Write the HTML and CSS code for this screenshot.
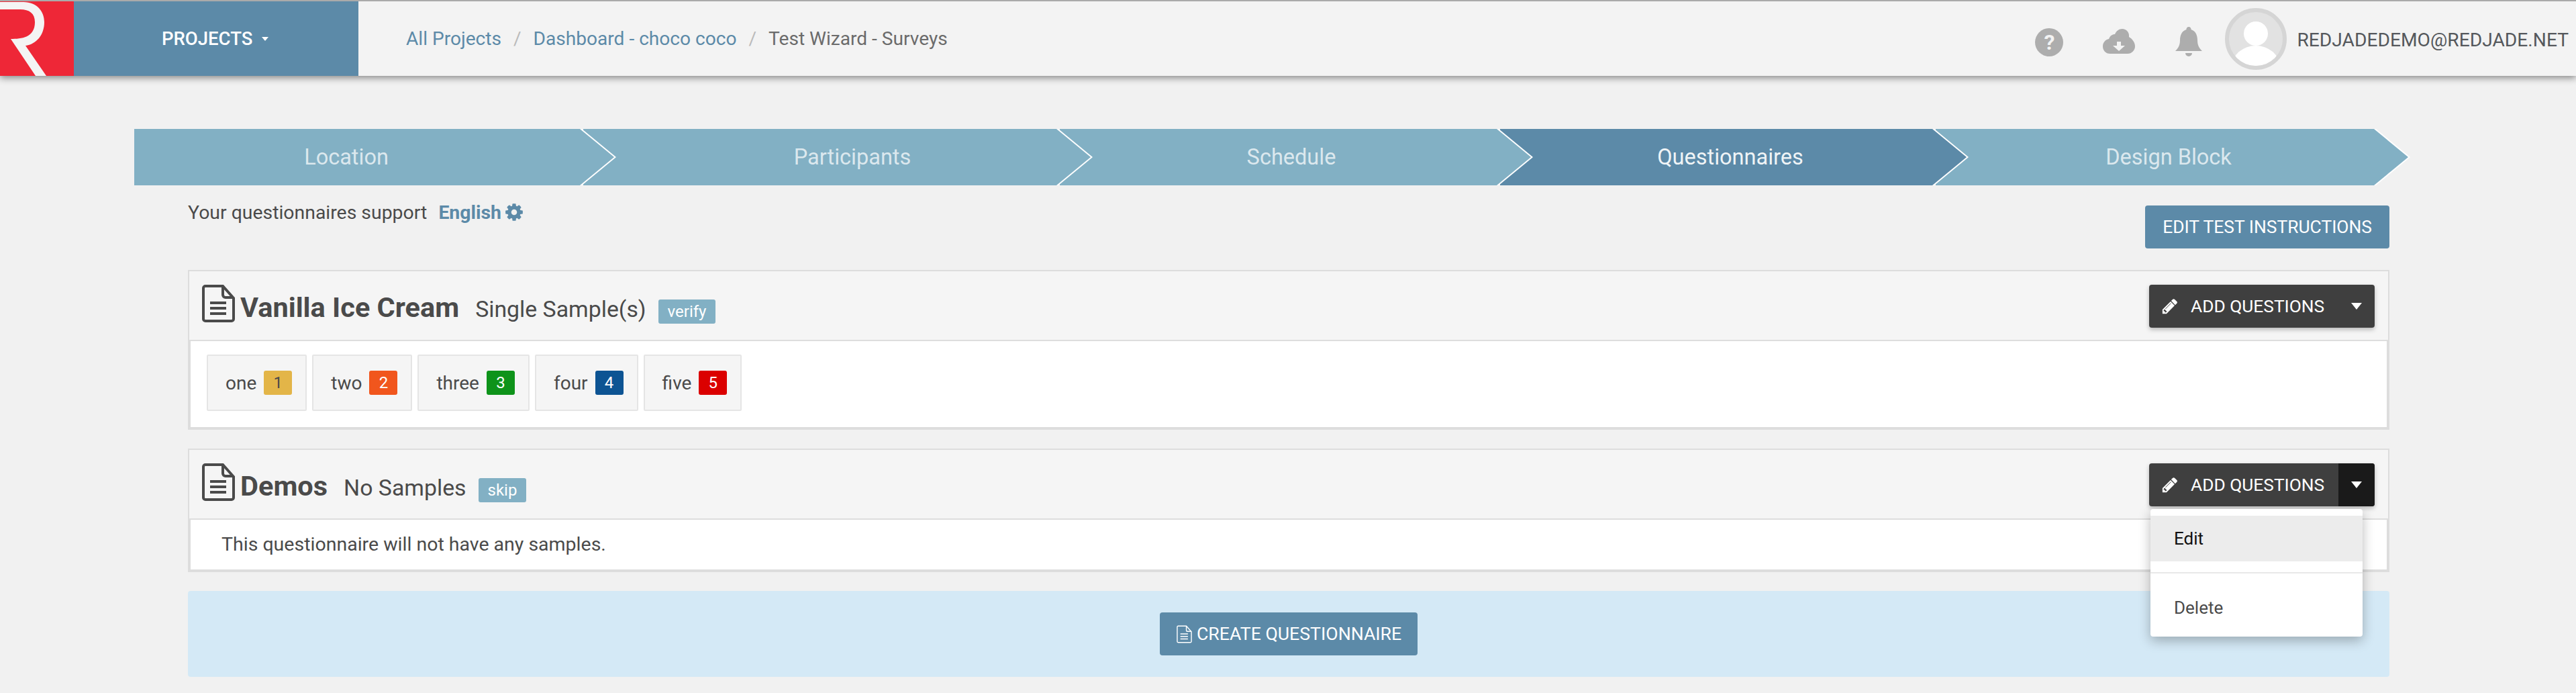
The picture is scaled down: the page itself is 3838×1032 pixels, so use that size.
FILE: index.html
```html
<!DOCTYPE html>
<html lang="en">
<head>
<meta charset="utf-8">
<title>Test Wizard - Surveys</title>
<link rel="stylesheet" href="styles.css">
</head>
<body>
<svg class="defs" width="0" height="0" aria-hidden="true">
  <symbol id="file" viewBox="0 0 49 56">
    <path d="M5 2H31L47 20V51a3 3 0 0 1-3 3H5a3 3 0 0 1-3-3V5a3 3 0 0 1 3-3Z"/>
    <path d="M31 2V15a4 4 0 0 0 4 4H47"/>
    <path d="M12 27H36M12 35H36M12 43H36"/>
  </symbol>
  <symbol id="pencil" viewBox="0 0 1792 1792">
    <path fill="currentColor" d="M491 1536l91-91-235-235-91 91v107h128v128h107zm523-928q0-22-22-22-10 0-17 7l-542 542q-7 7-7 17 0 22 22 22 10 0 17-7l542-542q7-7 7-17zm-54-192l416 416-832 832h-416v-416zm683 96q0 53-37 90l-166 166-416-416 166-165q36-38 90-38 53 0 91 38l235 234q37 39 37 91z"/>
  </symbol>
</svg>

<header class="topbar">
  <a class="logo">
    <svg viewBox="0 2 110 111" width="110" height="111"><path fill="#f4f4f4" d="M0 3H35C55 3 66 17 66 33C66 52 54 66 38 68L69 113H53L16 58C32 58 52 56 52 33C52 20 44 14 30 14H0Z"/></svg>
  </a>
  <a class="projects">PROJECTS<span class="caret-sm"></span></a>
  <nav class="crumbs">
    <a>All Projects</a><span class="sep">/</span><a>Dashboard - choco coco</a><span class="sep">/</span><span class="current">Test Wizard - Surveys</span>
  </nav>
  <div class="user">
    <span class="help">?</span>
    <svg class="cloud" viewBox="0 0 48 37" width="48" height="37"><path fill="#adadad" d="M11 37C4 37 0 32 0 26C0 20 4 16 9 15C11 10 14 8 18 8C20 3 24 0 29 0C35 0 40 5 39 12C44 15 48 20 48 26C48 32 43 37 37 37Z"/><path fill="#f3f3f3" d="M21 19H27V25H33L24 33L15 25H21Z"/></svg>
    <svg class="bell" viewBox="0 0 40 44" width="40" height="44"><path fill="#adadad" d="M20 0a3.500 3.500 0 0 1 3.500 4C30 6 33 12 33 20C33 28 36 32 40 36H0C4 32 7 28 7 20C7 12 10 6 16.500 4A3.500 3.500 0 0 1 20 0ZM15 39H25A5 5 0 0 1 15 39Z"/></svg>
    <svg class="avatar" viewBox="0 0 92 92" width="92" height="92">
      <defs><clipPath id="avatar-clip"><circle cx="46" cy="46" r="40"/></clipPath></defs>
      <circle cx="46" cy="46" r="43" fill="#e2e2e2" stroke="#d5d5d5" stroke-width="6"/>
      <g clip-path="url(#avatar-clip)" fill="#fff"><ellipse cx="46" cy="38" rx="18" ry="18"/><ellipse cx="46" cy="88" rx="36" ry="32"/></g>
    </svg>
    <span class="email">REDJADEDEMO@REDJADE.NET</span>
  </div>
</header>

<main class="page">
  <ol class="stepper">
    <li class="step step-location"><span class="step-fill">Location</span></li>
    <li class="step step-participants"><span class="step-fill">Participants</span></li>
    <li class="step step-schedule"><span class="step-fill">Schedule</span></li>
    <li class="step step-questionnaires is-active"><span class="step-fill">Questionnaires</span></li>
    <li class="step step-design"><span class="step-fill">Design Block</span></li>
  </ol>

  <section class="content">
    <div class="support-row">
      <p class="support">Your questionnaires support <a class="lang">English <svg class="gear" viewBox="0 0 1792 1792" width="30" height="30"><path fill="currentColor" d="M1152 896q0-106-75-181t-181-75-181 75-75 181 75 181 181 75 181-75 75-181zm512-109v222q0 12-8 23t-20 13l-185 28q-19 54-39 91 35 50 107 138 10 12 10 25t-9 23q-27 37-99 108t-94 71q-12 0-26-9l-138-108q-44 23-91 38-16 136-29 186-7 28-36 28h-222q-14 0-24.500-8.500t-11.500-21.500l-28-184q-49-16-90-37l-141 107q-10 9-25 9-14 0-25-11-126-114-165-168-7-10-7-23 0-12 8-23 15-21 51-66.500t54-70.500q-27-50-41-99l-183-27q-13-2-21-12.500t-8-23.500v-222q0-12 8-23t19-13l186-28q14-46 39-92-40-57-107-138-10-12-10-24 0-10 9-23 26-36 98.500-107.500t94.500-71.500q13 0 26 10l138 107q44-23 91-38 16-136 29-186 7-28 36-28h222q14 0 24.500 8.500t11.500 21.500l28 184q49 16 90 37l142-107q9-9 24-9 13 0 25 10 129 119 165 170 7 8 7 22 0 12-8 23-15 21-51 66.500t-54 70.500q26 50 41 98l183 28q13 2 21 12.500t8 23.500z"/></svg></a></p>
      <a class="btn btn-blue btn-instructions">EDIT TEST INSTRUCTIONS</a>
    </div>

    <article class="card">
      <div class="card-head">
        <svg class="file-icon"><use href="#file"/></svg>
        <h2 class="card-title">Vanilla Ice Cream</h2>
        <span class="card-sub">Single Sample(s)</span>
        <span class="tag">verify</span>
        <div class="split">
          <a class="split-main"><svg class="pencil"><use href="#pencil"/></svg>ADD QUESTIONS</a>
          <a class="split-toggle"><span class="caret"></span></a>
        </div>
      </div>
      <div class="card-body samples">
        <span class="chip">one<b class="badge badge-1">1</b></span>
        <span class="chip">two<b class="badge badge-2">2</b></span>
        <span class="chip">three<b class="badge badge-3">3</b></span>
        <span class="chip">four<b class="badge badge-4">4</b></span>
        <span class="chip">five<b class="badge badge-5">5</b></span>
      </div>
    </article>

    <article class="card">
      <div class="card-head">
        <svg class="file-icon"><use href="#file"/></svg>
        <h2 class="card-title">Demos</h2>
        <span class="card-sub">No Samples</span>
        <span class="tag">skip</span>
        <div class="split is-open">
          <a class="split-main"><svg class="pencil"><use href="#pencil"/></svg>ADD QUESTIONS</a>
          <a class="split-toggle"><span class="caret"></span></a>
          <ul class="menu">
            <li class="menu-item is-hover">Edit</li>
            <li class="menu-divider"></li>
            <li class="menu-item menu-delete">Delete</li>
          </ul>
        </div>
      </div>
      <div class="card-body note">This questionnaire will not have any samples.</div>
    </article>

    <div class="create-band">
      <a class="btn btn-blue btn-create"><svg class="file-small"><use href="#file"/></svg>CREATE QUESTIONNAIRE</a>
    </div>
  </section>
</main>
</body>
</html>
```

FILE: styles.css
```css
* { box-sizing: border-box; }
html, body { margin: 0; padding: 0; }
body {
  background: #f1f1f1;
  color: #4a4a4a;
  font-family: Roboto, "Liberation Sans", sans-serif;
  font-size: 28px;
  height: 1032px;
  overflow: hidden;
}
.defs { position: absolute; }
a { color: inherit; text-decoration: none; }

/* top bar */
.topbar {
  display: flex;
  align-items: stretch;
  height: 113px;
  border-top: 2px solid #aaa;
  background: #f3f3f3;
  box-shadow: 0 3px 10px rgba(0, 0, 0, .45);
}
.logo { width: 110px; background: #ee2737; display: block; }
.logo svg { display: block; }
.projects {
  width: 424px;
  background: #5c8aa8;
  color: #fff;
  font-size: 27.5px;
  font-weight: 500;
  display: flex;
  align-items: center;
  padding-left: 131px;
}
.caret-sm {
  margin-left: 14px;
  border-top: 6px solid #fff;
  border-left: 5px solid transparent;
  border-right: 5px solid transparent;
}
.crumbs {
  display: flex;
  align-items: center;
  padding-left: 71px;
  font-size: 28.1px;
  color: #5c8aa8;
}
.sep { color: #bbb; margin: 0 18px; }
.current { color: #6b6b6b; }
.user { margin-left: auto; display: flex; align-items: center; padding-right: 11px; }
.help {
  width: 42px;
  height: 42px;
  border-radius: 50%;
  background: #adadad;
  color: #f3f3f3;
  font-weight: 700;
  font-size: 32px;
  display: flex;
  align-items: center;
  justify-content: center;
  margin-top: 11px;
}
.cloud { margin: 7px 0 0 59px; filter: blur(.6px); }
.bell { margin: 9px 0 0 60px; }
.avatar { margin-left: 34px; }
.email { margin: 4px 0 0 15px; font-size: 28.2px; color: #55585c; }

/* main column */
.page { padding-top: 79px; }
.stepper {
  list-style: none;
  margin: 0 0 0 200px;
  padding: 0;
  display: flex;
  height: 84px;
}
.step {
  position: relative;
  background: #fff;
  clip-path: polygon(0 0, calc(100% - 51px) 0, 100% 50%, calc(100% - 51px) 100%, 0 100%);
  margin-left: -49px;
}
.step-fill {
  display: flex;
  align-items: center;
  justify-content: center;
  height: 100%;
  margin-right: 3px;
  background: #82b0c4;
  color: rgba(255, 255, 255, .72);
  font-size: 32.5px;
  clip-path: polygon(0 0, calc(100% - 51px) 0, 100% 50%, calc(100% - 51px) 100%, 0 100%);
}
.is-active .step-fill { background: #5c8aa8; color: rgba(255, 255, 255, .92); }
.step-location { width: 718px; margin-left: 0; z-index: 5; }
.step-location .step-fill { padding-right: 83px; }
.step-participants { width: 759px; z-index: 4; }
.step-participants .step-fill { padding-left: 46px; }
.step-schedule { width: 705px; z-index: 3; }
.step-schedule .step-fill { padding-right: 12px; }
.step-questionnaires { width: 698px; z-index: 2; }
.step-questionnaires .step-fill { padding-right: 9px; }
.step-design { width: 707px; z-index: 1; }
.step-design .step-fill { padding-right: 10px; }

.content { width: 3280px; margin-left: 280px; }
.support-row { display: flex; justify-content: space-between; align-items: flex-start; }
.support { margin: 25px 0 0; line-height: 30px; font-size: 28.4px; color: #4a4a4a; }
.lang { color: #5c8aa8; font-weight: 700; margin-left: 10px; }
.gear { vertical-align: -5px; margin-left: -3px; }

.btn {
  display: flex;
  align-items: center;
  height: 64px;
  border-radius: 4px;
  color: #fff;
  font-size: 26.4px;
}
.btn-blue { background: #5c8aa8; }
.btn-instructions { margin-top: 30px; padding: 0 26px; }

/* cards */
.card { margin-top: 28px; }
.support-row + .card { margin-top: 32px; }
.card-head {
  display: flex;
  align-items: center;
  height: 106px;
  padding: 0 20px 0 19px;
  background: #f5f5f5;
  border: 2px solid #ddd;
}
.file-icon {
  width: 49px;
  height: 56px;
  fill: none;
  stroke: #4a4a4a;
  stroke-width: 4;
  margin: -6px 8px 0 0;
}
.card-title { margin: 6px 0 0; font-size: 41.5px; font-weight: 700; color: #4a4a4a; line-height: 48px; }
.card-sub { font-size: 33.8px; margin: 10px 0 0 24px; color: #4a4a4a; }
.tag {
  background: #82b0c4;
  color: #fff;
  font-size: 24px;
  line-height: 36px;
  height: 36px;
  padding: 0 14px;
  border-radius: 3px;
  margin: 18px 0 0 18px;
}
.split {
  position: relative;
  margin-left: auto;
  margin-top: 2px;
  display: flex;
  height: 64px;
  width: 336px;
  border-radius: 4px;
  background: #3f3f3f;
  color: #fff;
  box-shadow: 0 3px 6px rgba(0, 0, 0, .25);
  font-size: 26.3px;
}
.split-main { display: flex; align-items: center; width: 282px; padding-left: 18px; }
.pencil { width: 26px; height: 26px; color: #fff; margin-right: 18px; }
.split-toggle { width: 54px; display: flex; align-items: center; justify-content: center; border-radius: 0 4px 4px 0; }
.is-open .split-toggle { background: #1a1a1a; }
.caret {
  border-top: 10px solid #fff;
  border-left: 8px solid transparent;
  border-right: 8px solid transparent;
}
.card-body { background: #fff; border: solid #ddd; border-width: 0 4px 4px; }
.samples { display: flex; gap: 8px; padding: 20px 24px 24px; }
.chip {
  display: flex;
  align-items: center;
  height: 84px;
  padding: 0 20px 0 26px;
  background: #f5f5f5;
  border: 2px solid #e5e5e5;
  border-radius: 2px;
  font-size: 28px;
}
.badge {
  width: 42px;
  height: 36px;
  margin-left: 11px;
  border-radius: 3px;
  color: #fff;
  font-size: 24px;
  font-weight: 400;
  text-align: center;
  line-height: 36px;
}
.badge-1 { background: #e3b548; color: #4a4a4a; }
.badge-2 { background: #f1561d; }
.badge-3 { background: #0e931a; }
.badge-4 { background: #0d5493; }
.badge-5 { background: #db0000; }
.note { height: 78px; padding: 20px 0 0 46px; font-size: 28.5px; line-height: 34px; }

/* dropdown */
.menu {
  position: absolute;
  top: 68px;
  right: 18px;
  width: 316px;
  height: 190px;
  margin: 0;
  padding: 10px 0 0;
  list-style: none;
  background: #fff;
  border-radius: 4px;
  box-shadow: 0 6px 18px rgba(0, 0, 0, .28);
  z-index: 10;
}
.menu-item { padding-left: 35px; font-size: 26px; }
.is-hover { height: 68px; line-height: 68px; background: #ececec; color: #111; }
.menu-divider { height: 2px; margin: 16px 0 0; background: #e8e8e8; }
.menu-delete { margin-top: 30px; color: #4a4a4a; line-height: 42px; }

/* create */
.create-band {
  display: flex;
  justify-content: center;
  margin-top: 28px;
  padding: 32px 0;
  background: #d4e9f6;
  border-radius: 4px;
}
.btn-create { width: 384px; padding-left: 25px; font-size: 26.7px; }
.file-small {
  width: 23px;
  height: 27px;
  fill: none;
  stroke: #fff;
  stroke-width: 3;
  margin-right: 7px;
}
```
